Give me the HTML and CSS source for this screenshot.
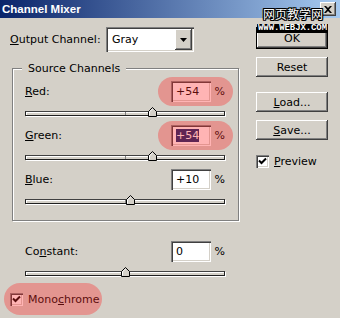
FILE: index.html
```html
<!DOCTYPE html>
<html>
<head>
<meta charset="utf-8">
<link rel="stylesheet" href="styles.css">
</head>
<body>
<div class="window">
  <div class="titlebar">
    <span class="title">Channel Mixer</span>
    <span class="close"><svg width="8" height="7" viewBox="0 0 8 7"><path d="M0 0h2l2 2 2-2h2L5 3.5 8 7H6L4 5 2 7H0l3-3.5z" fill="#000"/></svg></span>
  </div>
  <div class="wm-cn">网页教学网</div>
  <div class="wm-en">WWW.WEBJX.COM</div>

  <div class="main">
    <div class="left">
      <div class="output-row">
        <span class="out-label"><u>O</u>utput Channel:</span>
        <div class="select">
          <span class="select-text">Gray</span>
          <span class="select-btn"><svg width="7" height="4" viewBox="0 0 7 4"><path d="M0 0h7L3.5 4z" fill="#000"/></svg></span>
        </div>
      </div>

      <div class="group">
        <span class="legend">Source Channels</span>

        <div class="channel">
          <div class="chan-row">
            <span class="lbl"><u>R</u>ed:</span>
            <span class="field">+54</span>
            <span class="pct">%</span>
            <span class="pill pill-chan"></span>
          </div>
          <div class="slider">
            <div class="track"><span class="tick"></span></div>
            <svg class="thumb" style="left:63.5%" width="9" height="10" viewBox="0 0 9 10"><path d="M0.5 9.5V4.5L4.5 0.5L8.5 4.5V9.5Z" fill="#d4d0c8" stroke="#000"/><path d="M1.5 8.5V4.9L4.5 1.9" fill="none" stroke="#fff"/></svg>
          </div>
        </div>

        <div class="channel">
          <div class="chan-row">
            <span class="lbl"><u>G</u>reen:</span>
            <span class="field"><span class="sel">+54</span></span>
            <span class="pct">%</span>
            <span class="pill pill-chan"></span>
          </div>
          <div class="slider">
            <div class="track"><span class="tick"></span></div>
            <svg class="thumb" style="left:63.5%" width="9" height="10" viewBox="0 0 9 10"><path d="M0.5 9.5V4.5L4.5 0.5L8.5 4.5V9.5Z" fill="#d4d0c8" stroke="#000"/><path d="M1.5 8.5V4.9L4.5 1.9" fill="none" stroke="#fff"/></svg>
          </div>
        </div>

        <div class="channel">
          <div class="chan-row">
            <span class="lbl"><u>B</u>lue:</span>
            <span class="field">+10</span>
            <span class="pct">%</span>
          </div>
          <div class="slider">
            <div class="track"><span class="tick"></span></div>
            <svg class="thumb" style="left:52.5%" width="9" height="10" viewBox="0 0 9 10"><path d="M0.5 9.5V4.5L4.5 0.5L8.5 4.5V9.5Z" fill="#d4d0c8" stroke="#000"/><path d="M1.5 8.5V4.9L4.5 1.9" fill="none" stroke="#fff"/></svg>
          </div>
        </div>
      </div>

      <div class="constant">
        <div class="chan-row">
          <span class="lbl">Co<u>n</u>stant:</span>
          <span class="field">0</span>
          <span class="pct">%</span>
        </div>
        <div class="slider">
          <div class="track"><span class="tick"></span></div>
          <svg class="thumb" style="left:50%" width="9" height="10" viewBox="0 0 9 10"><path d="M0.5 9.5V4.5L4.5 0.5L8.5 4.5V9.5Z" fill="#d4d0c8" stroke="#000"/><path d="M1.5 8.5V4.9L4.5 1.9" fill="none" stroke="#fff"/></svg>
        </div>
      </div>

      <div class="mono">
        <span class="cb"><svg width="9" height="9" viewBox="0 0 9 9"><path d="M1 3.5L3.5 6L8 1.5" fill="none" stroke="#000" stroke-width="2"/></svg></span>
        <span>Mono<u>c</u>hrome</span>
        <span class="pill pill-mono"></span>
      </div>
    </div>

    <div class="right">
      <div class="btn default">OK</div>
      <div class="btn reset">Reset</div>
      <div class="btn load"><span><u>L</u>oad...</span></div>
      <div class="btn save"><span><u>S</u>ave...</span></div>
      <div class="pv">
        <span class="cb"><svg width="9" height="9" viewBox="0 0 9 9"><path d="M1 3.5L3.5 6L8 1.5" fill="none" stroke="#000" stroke-width="2"/></svg></span>
        <span><u>P</u>review</span>
      </div>
    </div>
  </div>
</div>
</body>
</html>
```

FILE: styles.css
```css
* { box-sizing: border-box; }
html, body { margin: 0; padding: 0; }
body {
  width: 340px;
  height: 318px;
  overflow: hidden;
  background: #d4d0c8;
  font-family: "DejaVu Sans", Tahoma, sans-serif;
  font-size: 11px;
  line-height: 13px;
  color: #000;
}
u { text-decoration: underline; text-underline-offset: 1px; }

.window { position: relative; width: 340px; height: 318px; }

.titlebar {
  height: 18px;
  background: linear-gradient(to right, #0a246a, #a6caf0);
  display: flex;
  align-items: center;
  justify-content: space-between;
  padding: 0 4px 0 2px;
}
.title {
  font-family: "Liberation Sans", Arial, sans-serif;
  font-weight: bold;
  font-size: 11.5px;
  color: #fff;
}
.close {
  width: 16px;
  height: 14px;
  background: #d4d0c8;
  box-shadow: inset -1px -1px #404040, inset 1px 1px #fff, inset -2px -2px #808080;
  display: flex;
  align-items: center;
  justify-content: center;
}

.wm-cn {
  position: absolute;
  left: 263px;
  top: 7px;
  font-family: "Noto Sans CJK SC", sans-serif;
  font-size: 12px;
  line-height: 14px;
  color: #fff;
  text-shadow: 1px 0 #000, -1px 0 #000, 0 1px #000, 0 -1px #000, 1px 1px #000, -1px -1px #000, 1px -1px #000, -1px 1px #000;
}
.wm-en {
  position: absolute;
  left: 257px;
  top: 24px;
  width: 71px;
  height: 9px;
  background: #000;
  color: #fff;
  font-family: "Liberation Mono", monospace;
  font-weight: bold;
  font-size: 9px;
  line-height: 9px;
  text-align: center;
  letter-spacing: -0.1px;
}

.main { display: flex; }
.left { width: 256px; }

.output-row {
  margin-top: 9px;
  padding-left: 10px;
  height: 25px;
  display: flex;
  align-items: center;
}
.out-label { width: 96px; }
.select {
  width: 88px;
  height: 25px;
  background: #fff;
  box-shadow: inset 1px 1px #808080, inset 2px 2px #404040, inset -1px -1px #fff, inset -2px -2px #d4d0c8;
  padding: 2px;
  display: flex;
  align-items: center;
}
.select-text { flex: 1; padding-left: 4px; }
.select-btn {
  width: 17px;
  height: 21px;
  background: #d4d0c8;
  box-shadow: inset -1px -1px #404040, inset 1px 1px #fff, inset -2px -2px #808080;
  display: flex;
  align-items: center;
  justify-content: center;
}

.group {
  position: relative;
  margin: 16px 0 0 12px;
  width: 227px;
  border: 1px solid #808080;
  box-shadow: inset 1px 1px 0 #fff, 1px 1px 0 #fff;
  padding: 12px 13px 7px 12px;
}
.legend {
  position: absolute;
  left: 9px;
  top: -7px;
  padding: 0 6px;
  background: #d4d0c8;
}

.chan-row {
  position: relative;
  display: flex;
  align-items: center;
  height: 21px;
}
.lbl { flex: 1; }
.field {
  width: 40px;
  height: 21px;
  background: #fff;
  box-shadow: inset 1px 1px #808080, inset 2px 2px #404040, inset -1px -1px #fff, inset -2px -2px #d4d0c8;
  padding: 0 3px 0 5px;
  display: flex;
  align-items: center;
}
.sel { background: #0a246a; color: #fff; }
.pct { width: 14px; text-align: right; }

.slider { position: relative; height: 23px; padding-top: 9px; }
.track {
  position: relative;
  height: 5px;
  background: #d4d0c8;
  border: 1px solid #202020;
  border-top-color: #404040;
  box-shadow: 1px 1px 0 #fff, inset 1px 1px 0 #fff;
}
.tick {
  position: absolute;
  left: 50%;
  top: 0;
  width: 1px;
  height: 3px;
  background: #808080;
}
.thumb {
  position: absolute;
  top: 5px;
  margin-left: -4px;
}

.pill {
  position: absolute;
  background: rgba(255, 40, 40, 0.35);
  border-radius: 16px;
  pointer-events: none;
  filter: blur(0.6px);
}
.pill-chan { left: 133px; right: -8px; top: -4px; bottom: -4px; }
.pill-mono { left: 4px; width: 98px; top: -2px; bottom: -1px; }

.constant { margin: 20px 0 0 25px; width: 200px; }

.mono {
  position: relative;
  display: flex;
  align-items: center;
  gap: 5px;
  height: 29px;
  padding-left: 10px;
}
.cb {
  width: 13px;
  height: 13px;
  background: #fff;
  box-shadow: inset 1px 1px #808080, inset 2px 2px #404040, inset -1px -1px #fff, inset -2px -2px #d4d0c8;
  display: flex;
  align-items: center;
  justify-content: center;
}

.right {
  width: 72px;
  padding-top: 9px;
  display: flex;
  flex-direction: column;
}
.btn {
  width: 72px;
  height: 20px;
  background: #d4d0c8;
  box-shadow: inset -1px -1px #404040, inset 1px 1px #fff, inset -2px -2px #808080;
  display: flex;
  align-items: center;
  justify-content: center;
}
.btn.default { height: 22px; border: 1px solid #000; }
.btn.reset { margin-top: 8px; }
.btn.load { margin-top: 15px; }
.btn.save { margin-top: 8px; }
.pv {
  margin-top: 15px;
  display: flex;
  align-items: center;
  gap: 5px;
}
```
